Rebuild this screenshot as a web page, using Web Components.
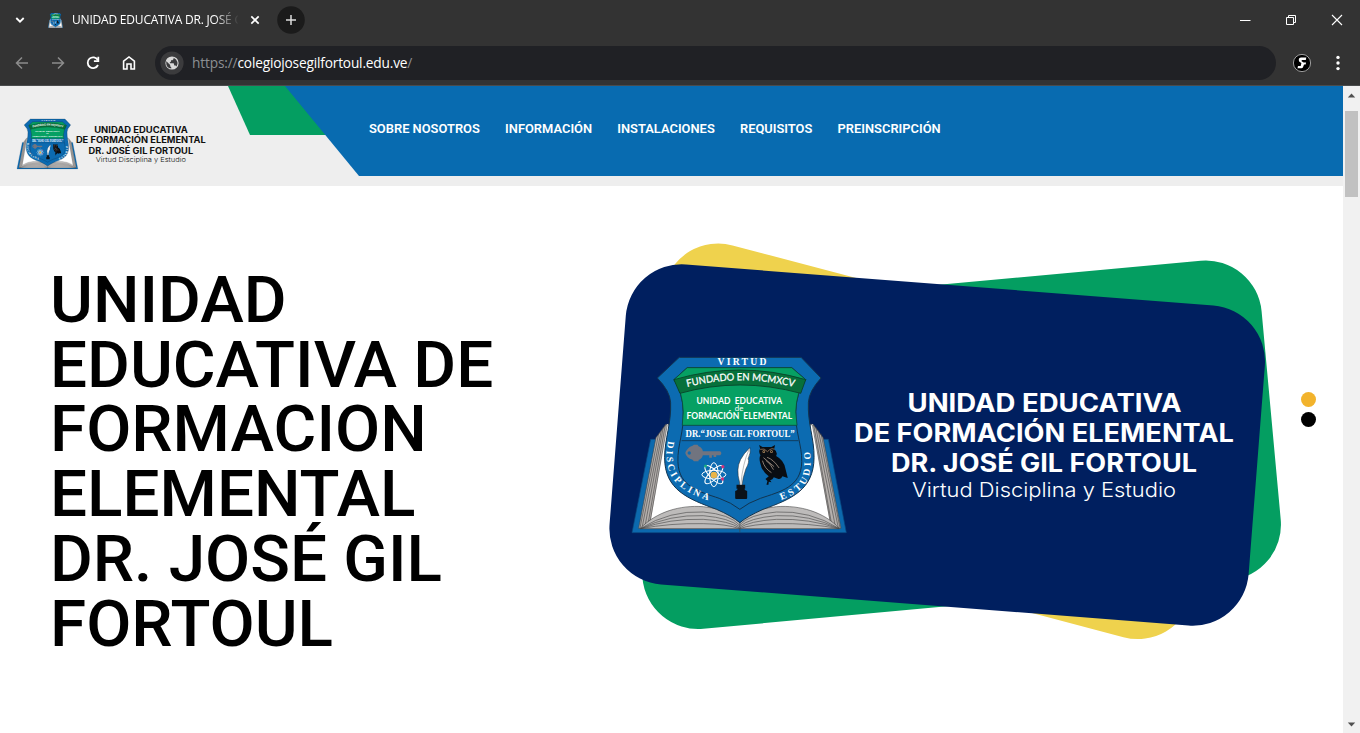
<!DOCTYPE html>
<html lang="es">
<head>
<meta charset="utf-8">
<title>UNIDAD EDUCATIVA DR. JOSÉ GIL FORTOUL</title>
<style>
html,body{margin:0;height:100%;overflow:hidden;background:#fff;font-family:Roboto,"Liberation Sans",sans-serif}
</style>
</head>
<body>
<app-window></app-window>
<script>
const define=(name,html)=>{
  const t=document.createElement('template');t.innerHTML=html;
  customElements.define(name,class extends HTMLElement{
    constructor(){super();this.attachShadow({mode:'open'}).append(t.content.cloneNode(true));}
  });
};

/* School emblem: open book, shield and symbols */
define('school-emblem',`
<style>:host{display:block}svg{display:block;width:100%;height:100%;overflow:visible}</style>
<svg viewBox="36 36 646 528" preserveAspectRatio="none">
  <path d="M92 283L36 563H680L626 283Z" fill="#0c69ae" stroke="#0a477b" stroke-width="2"/>
  <g stroke="#444" stroke-width="1.8">
    <path d="M138 238L108 278L56 550H360L664 550L610 278L580 238Z" fill="#b5b0ad"/>
    <path d="M130 246L74 549M124 256L66 549M116 266L60 549M136 240L82 549M588 246L648 549M596 256L656 549M604 266L661 549M582 240L638 549" fill="none"/>
    <path d="M142 236L150 250L200 420L300 490L200 510L90 542ZM578 236L570 250L520 420L420 490L520 510L632 542Z" fill="#fff" stroke="none"/>
    <path d="M142 240L88 542M578 240L634 542" fill="none"/>
    <path d="M60 551C110 500 180 480 250 485Q320 490 360 532Q400 490 470 485C540 480 612 500 660 551Z" fill="#bdbbba"/>
    <path d="M62 550Q150 496 250 501Q330 508 359 540Q388 508 470 501Q570 496 658 550M62 551Q150 508 250 512Q330 519 359 545Q388 519 470 512Q570 508 658 551M62 551Q150 520 250 523Q330 528 359 549Q388 528 470 523Q570 520 658 551M62 551Q150 534 250 536Q320 537 359 551Q398 537 470 536Q570 534 658 551" fill="none"/>
    <path d="M360 530V562"/>
  </g>
  <path d="M178 37H544L604 99Q568 138 566 172C563 235 584 280 583 338C582 435 515 462 430 493Q384 513 360 533Q336 513 290 493C205 462 134 435 134 338C134 280 155 235 152 172Q150 138 112 99Z" fill="#0c6bb1" stroke="#12344f" stroke-width="3"/>
  <path d="M202 68H516L558 104Q530 140 528 200C526 260 547 300 546 350C545 427 480 440 422 460Q385 473 360 493Q335 473 298 460C240 440 176 427 174 350C172 300 193 260 190 200Q188 140 162 104Z" fill="#0c6bb1" stroke="#12344f" stroke-width="3"/>
  <path d="M202 68H516L558 104Q530 140 528 200L532 241H187L190 200Q188 140 162 104Z" fill="#06a063" stroke="#0b4a3a" stroke-width="2.5"/>
  <path d="M162 104Q360 46 558 104L543 145Q360 95 180 145Z" fill="#07703b" stroke="#083f28" stroke-width="2.5"/>
  <path d="M185 287H536" stroke="#12344f" stroke-width="2.5"/>
  <defs>
    <path id="arc" d="M202 126Q360 86 524 126"/>
    <path id="dis" d="M144 288C132 350 144 390 176 420C205 447 240 457 286 474"/>
    <path id="est" d="M484 465C530 448 568 425 572 370Q575 340 569 305"/>
  </defs>
  <g fill="#fff" font-weight="700">
    <g font-family="'Liberation Serif',serif">
      <text x="293" y="59" font-size="29" textLength="147">VIRTUD</text>
      <text x="197" y="275" font-size="31" textLength="328" lengthAdjust="spacingAndGlyphs">DR.“JOSE GIL FORTOUL”</text>
      <text font-size="29"><textPath href="#dis" textLength="243">DISCIPLINA</textPath></text>
      <text font-size="29"><textPath href="#est" textLength="188">ESTUDIO</textPath></text>
    </g>
    <g font-family="Lato,sans-serif" font-size="27">
      <text font-weight="400" font-size="30" stroke="#fff" stroke-width=".8"><textPath href="#arc" textLength="324" lengthAdjust="spacingAndGlyphs">FUNDADO EN MCMXCV</textPath></text>
      <text x="230" y="177" textLength="257" lengthAdjust="spacingAndGlyphs" xml:space="preserve">UNIDAD  EDUCATIVA</text>
      <text x="345" y="198" font-size="20" font-weight="400" textLength="26" lengthAdjust="spacingAndGlyphs">de</text>
      <text x="200" y="222" textLength="317" lengthAdjust="spacingAndGlyphs" xml:space="preserve">FORMACIÓN  ELEMENTAL</text>
    </g>
  </g>
  <path d="M196 324Q202 307 218 302L222 299H233L236 304Q247 308 249 319H301Q308 325 301 331H289V336H281V331H276V338H268V331H249Q246 342 236 345V349H222L218 344Q200 340 196 324Z" fill="#71747f"/>
  <circle cx="208" cy="324" r="5" fill="#0c6bb1"/>
  <g fill="none" stroke="#fff" stroke-width="3">
    <ellipse cx="282" cy="389" rx="36" ry="13"/><ellipse cx="282" cy="389" rx="36" ry="13" transform="rotate(45 282 389)"/><ellipse cx="282" cy="389" rx="36" ry="13" transform="rotate(90 282 389)"/><ellipse cx="282" cy="389" rx="36" ry="13" transform="rotate(135 282 389)"/>
  </g>
  <circle cx="282" cy="390" r="10" fill="#eab448"/><circle cx="309" cy="365" r="5" fill="#c7317b"/><circle cx="308" cy="402" r="5" fill="#c7317b"/><circle cx="257" cy="363" r="4.5" fill="#19ad80"/>
  <path d="M359 411Q348 372 362 344Q372 325 390 308Q394 322 385 341Q390 350 378 372L370 399L366 425H360Z" fill="#fff" stroke="#222" stroke-width="1.5"/>
  <path d="M387 315Q369 355 363 418" fill="none" stroke="#777" stroke-width="1.5"/>
  <path d="M350 419H376V431H373Q376 436 382 438V459Q382 462 379 462H349Q346 462 346 459V438Q352 436 354 431H350Z" fill="#0b1219"/>
  <path d="M418 300L428 306H455L466 300L463 312Q475 322 469 333Q492 345 497 371L504 399L488 394Q484 404 474 401L462 397Q459 404 451 406L455 412L447 410L446 419H440L443 408L437 402L447 394Q425 378 421 353Q417 338 422 331Q415 319 421 311Z" fill="#090d12"/>
  <path d="M421 313Q434 308 443 320Q455 307 464 313" fill="none" stroke="#9a765b" stroke-width="2.5"/><circle cx="432" cy="320" r="4" fill="#b99467"/><circle cx="455" cy="320" r="4" fill="#b99467"/><circle cx="432" cy="320" r="2"/><circle cx="455" cy="320" r="2"/>
  <path d="M431 338L463 365M428 347Q434 370 455 383M442 337Q461 343 478 369M438 346Q452 355 461 374" fill="none" stroke="#a39384" stroke-width="2.5"/>
</svg>`);

/* School name in four centred lines; colour is inherited */
define('school-caption',`
<style>:host{display:block}svg{display:block;width:100%;height:100%;overflow:visible}
text{font-family:Inter,"Open Sans",sans-serif;fill:currentColor}</style>
<svg viewBox="855 385 379 120">
  <g font-weight="700" font-size="25">
    <text x="907.5" y="412" textLength="274" lengthAdjust="spacingAndGlyphs">UNIDAD EDUCATIVA</text>
    <text x="854" y="442" textLength="380" lengthAdjust="spacingAndGlyphs">DE FORMACIÓN ELEMENTAL</text>
    <text x="891" y="472" textLength="306" lengthAdjust="spacingAndGlyphs">DR. JOSÉ GIL FORTOUL</text>
  </g>
  <text x="912" y="497.3" font-size="19.4" font-weight="300" textLength="264" lengthAdjust="spacingAndGlyphs">Virtud Disciplina y Estudio</text>
</svg>`);

define('tab-strip',`
<style>
:host{display:flex;height:40px;align-items:center;color:#fff;font:12px/16px "Open Sans","Noto Sans",sans-serif}
svg{display:block;flex:none}
.down{margin-left:14px}
school-emblem{width:15px;height:15px;margin:0 9px 0 22px;flex:none}
.title{width:166px;overflow:hidden;white-space:nowrap;letter-spacing:-.2px;
 -webkit-mask:linear-gradient(90deg,#000 142px,transparent 167px)}
.close{margin-left:11.5px}
.plus{margin-left:17px}
.win{margin-left:auto;display:flex;align-items:center;gap:34px;margin-right:17px}
</style>
<svg class="down" width="12" height="12" fill="none" stroke="#fff" stroke-width="1.8"><path d="M2.3 4L6 7.7L9.7 4"/></svg>
<school-emblem></school-emblem>
<div class="title">UNIDAD EDUCATIVA DR. JOSÉ G</div>
<svg class="close" width="10" height="10" fill="none" stroke="#fff" stroke-width="1.7"><path d="M1.3 1.3L8.7 8.7M8.7 1.3L1.3 8.7"/></svg>
<svg class="plus" width="28" height="28"><circle cx="14" cy="14" r="13.8" fill="#1b1b1b"/><path d="M14 9V19M9 14H19" stroke="#ddd" stroke-width="1.5"/></svg>
<div class="win">
<svg width="11" height="11"><path d="M0 5.5H10.5" stroke="#fff"/></svg>
<svg width="12" height="12" fill="none" stroke="#fff"><path d="M1.5 3.5H8.5V10.5H1.5ZM3.5 3.5V1.5H10.5V8.5H8.5"/></svg>
<svg width="12" height="12" fill="none" stroke="#fff" stroke-width="1.1"><path d="M1 1L11 11M11 1L1 11"/></svg>
</div>`);

define('tool-bar',`
<style>
:host{display:flex;height:45px;align-items:center;font:13.7px/18px "Open Sans","Noto Sans",sans-serif}
svg{display:block;flex:none}
.nav{display:flex;gap:19.6px;margin-left:14px;width:141px}
.url{flex:1;height:34px;border-radius:17px;background:#202125;display:flex;align-items:center;color:#8c8f93;letter-spacing:-.15px}
.url svg{margin:0 8px 0 5px}
b{font-weight:400;color:#fff;letter-spacing:-.18px}
.url span{white-space:nowrap}
.ext{margin:0 24px 0 16px}
.menu{margin-right:20px}
</style>
<div class="nav">
<svg width="16" height="16" fill="none" stroke="#8c8c8c" stroke-width="1.5"><path d="M14 8H3M8 2.5L2.5 8L8 13.5"/></svg>
<svg width="16" height="16" fill="none" stroke="#8c8c8c" stroke-width="1.5"><path d="M2 8H13M8 2.5L13.5 8L8 13.5"/></svg>
<svg width="16" height="16" fill="none" stroke="#fff" stroke-width="1.8"><path d="M12.8 5A5.4 5.4 0 1 0 13 10"/><path d="M13.3 1.8V6.2H8.9" /></svg>
<svg width="16" height="16" fill="none" stroke="#fff" stroke-width="1.6"><path d="M2.6 6.2L8 1.9L13.4 6.2V14H10V9H6V14H2.6Z"/></svg>
</div>
<div class="url">
<svg width="24" height="24"><circle cx="12" cy="12" r="11.6" fill="#3b3b3d"/><circle cx="12" cy="12" r="6.6" fill="#d9d9d9"/><path d="M6.4 10.2L10.2 14V15.3L11.3 16.4V17.6Q6 17 6.2 11ZM13.6 6.7V8L12.4 9.3H11V10.6L9.8 11.6V12.3H13.7L14.3 14.4H15.6L16.5 15.6Q18 13.5 17.4 10.9Q16.6 8 13.6 6.7Z" fill="#3b3b3d"/></svg>
<span>https://<b>colegiojosegilfortoul.edu.ve</b>/</span>
</div>
<svg class="ext" width="20" height="20"><circle cx="10" cy="10" r="8.6" fill="#000" stroke="#aaa" stroke-width=".9"/><path d="M14.3 4.6H9.2Q6.6 4.8 6.8 7.2Q7 9 8.6 9.6L9.4 10L8.7 13H6L5.5 15.2H9.5Q11 15 11.4 13.2L12 11.4H13.6L14.1 9.6H11.6L9.6 8.2Q9.2 7 10.2 6.9H13.8Z" fill="#fff"/></svg>
<svg class="menu" width="4" height="16" fill="#fff"><circle cx="2" cy="2.4" r="1.7"/><circle cx="2" cy="8" r="1.7"/><circle cx="2" cy="13.6" r="1.7"/></svg>`);

define('site-header',`
<style>
:host{display:grid;grid-template-columns:359px 1fr;height:100px;background:#eee}
.brand{display:flex;align-items:flex-start;padding:32.5px 0 0 17px;height:67px;color:#111;position:relative}
.brand svg{position:absolute;left:228px;top:0}
school-emblem{width:61px;height:50px;margin-right:-2px}
school-caption{width:130px;height:41px;margin-top:5.5px}
nav{height:90px;background:#086bb0;display:flex;gap:25.2px;padding-left:10px;box-sizing:border-box;align-items:center;
 font:600 12.9px/20px Roboto,sans-serif;color:#fff;padding-bottom:4px}
nav span{white-space:nowrap}
</style>
<div class="brand"><school-emblem></school-emblem><school-caption></school-caption>
<svg width="132" height="90"><path d="M0 0H64L102 49H22Z" fill="#049e61"/><path d="M57 0H132V90H131Z" fill="#086bb0"/></svg></div>
<nav><span>SOBRE NOSOTROS</span><span>INFORMACIÓN</span><span>INSTALACIONES</span><span>REQUISITOS</span><span>PREINSCRIPCIÓN</span></nav>`);

define('hero-card',`
<style>
:host{display:flex;position:relative;width:671px;height:397px;color:#fff}
.bg{position:absolute;inset:0;overflow:visible}
school-emblem,school-caption{position:relative}
school-emblem{width:215px;height:176px;margin:114px 8px 0 22px}
school-caption{width:379px;height:120px;margin-top:142px}
</style>
<svg class="bg" width="671" height="397" viewBox="610 243 671 397">
<rect x="-295" y="-139.5" width="590" height="279" rx="56" transform="translate(928 441.3) rotate(14.8)" fill="#efd24d"/>
<rect x="-320.5" y="-160.5" width="641" height="321" rx="56" transform="translate(952 444.7) rotate(-5.25)" fill="#049e61"/>
<rect x="-320.5" y="-160.5" width="641" height="321" rx="56" transform="translate(937.2 445) rotate(4.45)" fill="#001f5f"/>
</svg>
<school-emblem></school-emblem><school-caption></school-caption>`);

define('slide-dots',`
<style>:host{display:grid;gap:5px}i{width:15px;height:15px;border-radius:50%;background:#000}.on{background:#f2b32c}</style><i class="on"></i><i></i>`);

define('hero-section',`
<style>
:host{display:flex;height:547px;background:#fff;align-items:flex-start}
h1{margin:82px 0 0 50px;width:560px;font:500 65.6px/64.7px Roboto,sans-serif;color:#000}
hero-card{margin-top:57px;flex:none}
slide-dots{margin:206px 0 0 20px}
</style>
<h1>UNIDAD<br>EDUCATIVA DE<br>FORMACION<br>ELEMENTAL<br>DR. JOSÉ GIL<br>FORTOUL</h1>
<hero-card></hero-card><slide-dots></slide-dots>`);

define('scroll-bar',`
<style>
:host{display:flex;flex-direction:column;align-items:center;justify-content:space-between;width:17px;background:#f1f1f1}
svg{display:block}.thumb{width:13px;height:86px;background:#c1c1c1;margin:8px 0 auto}
</style>
<svg width="17" height="17"><path d="M4.8 11.5L8.5 7.5L12.2 11.5Z" fill="#505050"/></svg>
<div class="thumb"></div>
<svg width="17" height="17"><path d="M4.8 6.5L8.5 10.5L12.2 6.5Z" fill="#505050"/></svg>`);

define('app-window',`
<style>
:host{display:flex;flex-direction:column;width:1360px;height:733px;background:#333;overflow:hidden}
.edge{height:1px;background:#4a4c4d}
.view{display:grid;grid-template-columns:1343px 17px;height:647px}
</style>
<tab-strip></tab-strip><tool-bar></tool-bar><div class="edge"></div>
<div class="view"><main><site-header></site-header><hero-section></hero-section></main><scroll-bar></scroll-bar></div>`);
</script>
</body>
</html>
